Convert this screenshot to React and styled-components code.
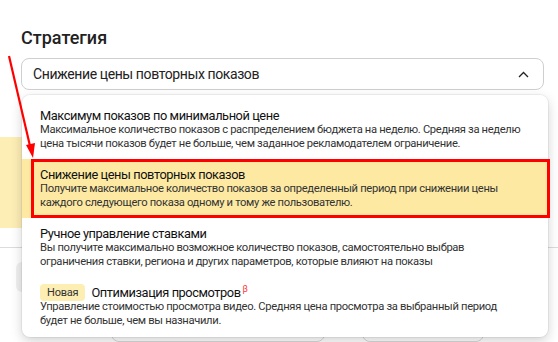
import React from 'react';
import styled, { createGlobalStyle } from 'styled-components';

const GlobalStyle = createGlobalStyle`
    body {
        margin: 0;
        font-family: Roboto, "Liberation Sans", sans-serif;
        color: #222;
        background: #fff;
    }
`;

const Page = styled.div`
    position: relative;
    width: 558px;
    height: 342px;
    overflow: hidden;
    background: #fff;
`;

const Content = styled.div`
    padding: 27px 14px 0 21px;
`;

const Heading = styled.h2`
    margin: 0;
    font-size: 18px;
    line-height: 22px;
    font-weight: 500;
    color: #222;
`;

const SelectBox = styled.div`
    margin-top: 9px;
    height: 32px;
    box-sizing: border-box;
    border: 1px solid #cfcfcf;
    border-radius: 8px;
    padding: 0 14px 0 11px;
    display: flex;
    align-items: center;
    justify-content: space-between;
    font-size: 14px;
    letter-spacing: -0.4px;
    color: #222;
`;

const Hint = styled.div`
    margin: 47px 0 0 -21px;
    height: 91px;
    background: #fdeeb6;
`;

const Divider = styled.div`
    margin: 19px -14px 0 -21px;
    height: 1px;
    background: #dcdcdc;
`;

const ButtonRow = styled.div`
    display: flex;
    gap: 12px;
    margin: 14px 0 0 -5px;
`;

const GhostButton = styled.div`
    width: ${p => p.$w}px;
    height: 30px;
    border-radius: 6px;
    background: #f0f0f0;
`;

const LowerRow = styled.div`
    display: flex;
    gap: 37px;
    margin: 16px 0 0 90px;
`;

const OutlineButton = styled.div`
    width: ${p => p.$w}px;
    height: 32px;
    border-radius: 8px;
    border: 1px solid #d8d8d8;
`;

const Menu = styled.div`
    position: absolute;
    top: 95px;
    left: 22px;
    width: 526px;
    height: 242px;
    box-sizing: border-box;
    padding-top: 5px;
    background: #fff;
    border-radius: 8px;
    box-shadow: 0 0 0 1px rgba(0, 0, 0, 0.05), 0 4px 12px rgba(0, 0, 0, 0.18);
`;

const Option = styled.div`
    padding: 8px 18px;
    background: ${p => (p.$active ? '#fde9a2' : 'transparent')};
`;

const OptionTitle = styled.div`
    display: flex;
    align-items: center;
    gap: 6px;
    font-size: 12.8px;
    letter-spacing: -0.42px;
    line-height: 15px;
    color: #111;
`;

const OptionText = styled.div`
    font-size: 11.2px;
    letter-spacing: -0.33px;
    line-height: 14px;
    white-space: nowrap;
    color: #333;
`;

const Badge = styled.span`
    display: inline-flex;
    align-items: center;
    height: 17px;
    margin: -2px 0 -1px;
    padding: 0 7px;
    border-radius: 4px;
    background: #fdefb3;
    font-size: 11px;
    letter-spacing: -0.2px;
    color: #333;
`;

const Beta = styled.sup`
    color: #f33;
    font-size: 9px;
    margin-left: -4px;
    position: relative;
    top: -3px;
`;

const Frame = styled.div`
    position: absolute;
    left: 31px;
    top: 159px;
    width: 519px;
    height: 59px;
    box-sizing: border-box;
    border: 3px solid #f00;
    pointer-events: none;
`;

const Arrow = styled.svg`
    position: absolute;
    left: 0;
    top: 0;
    pointer-events: none;
`;

const options = [
    {
        title: 'Максимум показов по минимальной цене',
        text: ['Максимальное количество показов с распределением бюджета на неделю. Средняя за неделю',
            'цена тысячи показов будет не больше, чем заданное рекламодателем ограничение.'],
    },
    {
        title: 'Снижение цены повторных показов',
        text: ['Получите максимальное количество показов за определенный период при снижении цены',
            'каждого следующего показа одному и тому же пользователю.'],
        active: true,
    },
    {
        title: 'Ручное управление ставками',
        text: ['Вы получите максимально возможное количество показов, самостоятельно выбрав',
            'ограничения ставки, региона и других параметров, которые влияют на показы'],
    },
    {
        title: 'Оптимизация просмотров',
        text: ['Управление стоимостью просмотра видео. Средняя цена просмотра за выбранный период',
            'будет не больше, чем вы назначили.'],
        isNew: true,
    },
];

const App = () => {
    return (
        <>
            <GlobalStyle />
            <Page>
                <Content>
                    <Heading>Стратегия</Heading>
                    <SelectBox>
                        Снижение цены повторных показов
                        <svg width="11" height="7" viewBox="0 0 11 7">
                            <path d="M1 6 L5.5 1.5 L10 6" fill="none" stroke="#222" strokeWidth="1.3" />
                        </svg>
                    </SelectBox>
                    <Hint />
                    <Divider />
                    <ButtonRow>
                        <GhostButton $w={120} />
                        <GhostButton $w={160} />
                    </ButtonRow>
                    <LowerRow>
                        <OutlineButton $w={212} />
                        <OutlineButton $w={120} />
                    </LowerRow>
                </Content>

                <Menu>
                    {options.map(o => (
                        <Option key={o.title} $active={o.active}>
                            <OptionTitle>
                                {o.isNew && <Badge>Новая</Badge>}
                                <span>{o.title}</span>
                                {o.isNew && <Beta>β</Beta>}
                            </OptionTitle>
                            <OptionText>
                                {o.text[0]}<br />{o.text[1]}
                            </OptionText>
                        </Option>
                    ))}
                </Menu>

                <Frame />
                <Arrow width="558" height="342" viewBox="0 0 558 342">
                    <line x1="9" y1="56" x2="30" y2="146" stroke="#f00" strokeWidth="2.2" />
                    <polygon points="33,158 26,145 35,143" fill="#f00" />
                </Arrow>
            </Page>
        </>
    );
};

export default App;
